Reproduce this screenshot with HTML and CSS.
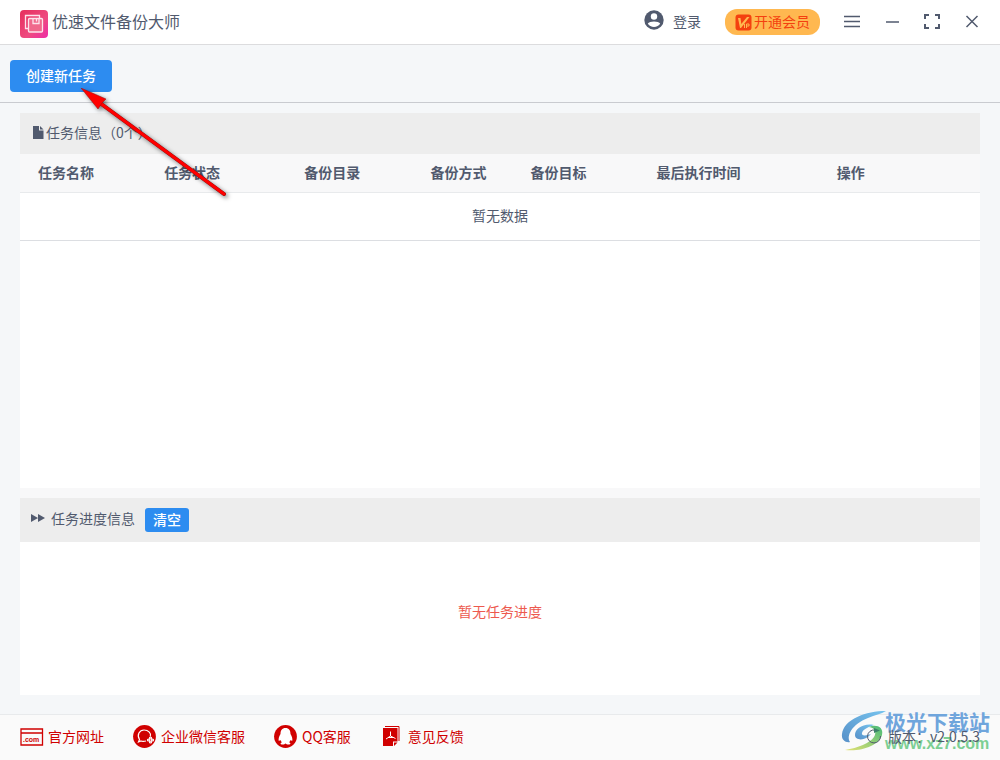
FILE: index.html
```html
<!DOCTYPE html>
<html lang="zh-CN">

<head>
    <meta charset="UTF-8">
    <meta name="viewport" content="width=device-width, initial-scale=1.0">
    <title>优速文件备份大师</title>
    <link rel="stylesheet" href="styles.css">
</head>

<body>
    <header class="titlebar">
        <svg class="logo" viewBox="0 0 28 28">
            <defs>
                <linearGradient id="logo-bg" x1="0" y1="0" x2="1" y2="1">
                    <stop offset="0" stop-color="#e62e5c" />
                    <stop offset="0.6" stop-color="#ee4a80" />
                    <stop offset="1" stop-color="#ee2aa8" />
                </linearGradient>
            </defs>
            <rect width="28" height="28" rx="4" fill="url(#logo-bg)" />
            <g fill="none" stroke="#fde3ec" stroke-width="1.3">
                <path d="M8.5 18.5H5.5V5.5H19.5V8" />
                <rect x="8.5" y="8.5" width="14" height="13.5" rx="1" fill="#f0688c" />
                <path d="M13 8.5v5h6v-5M16.5 9v2.5" />
            </g>
        </svg>
        <h1>优速文件备份大师</h1>
        <a href="#" class="login">
            <svg width="20" height="20" viewBox="0 0 20 20">
                <circle cx="10" cy="10" r="9.7" fill="#515a6e" />
                <circle cx="10" cy="6.5" r="3.2" fill="#fff" />
                <path d="M3.8 13.5C5.5 10.7 14.5 10.7 16.2 13.5C14 18 6 18 3.8 13.5Z" fill="#fff" />
            </svg>
            登录
        </a>
        <button type="button" class="vip">
            <svg width="17" height="17" viewBox="0 0 17 17">
                <rect x="0.5" y="0.5" width="16" height="16" rx="3" fill="#f4400f" />
                <path d="M3 4h2.5l.8 6L12 3h2.5L6 14H5Z" fill="#ffb850" />
                <path d="M9.5 10v4M11.5 14v-4h2.5v2h-2.5" fill="none" stroke="#ffb850" />
            </svg>
            开通会员
        </button>
        <div class="window-btns">
            <button type="button" aria-label="菜单">
                <svg width="16" height="16" viewBox="0 0 16 16"><path d="M0 2.5h16M0 7.5h16M0 12.5h16" /></svg>
            </button>
            <button type="button" aria-label="最小化">
                <svg width="16" height="16" viewBox="0 0 16 16"><path d="M2 8h13" /></svg>
            </button>
            <button type="button" aria-label="全屏">
                <svg width="16" height="16" viewBox="0 0 16 16"><path class="corners" d="M1 5V1H5M11 1h4V5M15 10v4h-4M5 14H1v-4" /></svg>
            </button>
            <button type="button" aria-label="关闭">
                <svg width="16" height="16" viewBox="0 0 16 16"><path d="M2.5 2l11 11M13.5 2l-11 11" /></svg>
            </button>
        </div>
    </header>

    <div class="toolbar">
        <button type="button" class="btn">创建新任务</button>
    </div>

    <main>
        <section class="tasks">
            <h2>
                <svg width="12" height="14" viewBox="0 0 12 14">
                    <path d="M1 1h6v4.5h4.5V14H1Z" fill="#515a6e" />
                    <path d="M8 1l3.5 3.5H8Z" fill="#515a6e" />
                </svg>
                任务信息（0个）
            </h2>
            <table>
                <colgroup>
                    <col class="name">
                    <col class="status">
                    <col class="dir">
                    <col class="mode">
                    <col class="target">
                    <col class="time">
                    <col class="action">
                </colgroup>
                <thead>
                    <tr>
                        <th>任务名称</th>
                        <th>任务状态</th>
                        <th>备份目录</th>
                        <th>备份方式</th>
                        <th>备份目标</th>
                        <th>最后执行时间</th>
                        <th>操作</th>
                    </tr>
                </thead>
                <tbody>
                    <tr>
                        <td colspan="7">暂无数据</td>
                    </tr>
                </tbody>
            </table>
        </section>

        <section class="progress">
            <h2>
                <svg width="15" height="10" viewBox="0 0 15 10">
                    <path d="M1 1l7 4L1 9ZM8 1l7 4l-7 4Z" fill="#515a6e" />
                </svg>
                <span>任务进度信息</span>
                <button type="button" class="btn small">清空</button>
            </h2>
            <p>暂无任务进度</p>
        </section>
    </main>

    <footer>
        <a href="#">
            <svg width="24" height="24" viewBox="0 0 24 24">
                <path d="M1 5h21.5v16H1ZM1 9h21.5" fill="none" stroke="#d00000" stroke-width="1.3" />
                <text x="3" y="18" class="dotcom">.com</text>
            </svg>
            官方网址
        </a>
        <a href="#">
            <svg width="24" height="24" viewBox="0 0 24 24">
                <circle cx="11.5" cy="12.5" r="11.4" fill="#d00000" />
                <g fill="none" stroke="#fff" stroke-width="1.2">
                    <path d="M13 17C11 17.500 9 17.500 8 17L5.500 18L6.500 15.500C3.500 11 6.500 6 11 6C15.500 6 18.500 9.500 17.300 12.500" />
                    <circle cx="17.500" cy="14" r="1" />
                    <circle cx="15.500" cy="16" r="1" />
                    <circle cx="19.500" cy="16" r="1" />
                    <circle cx="17.500" cy="18" r="1" />
                </g>
            </svg>
            企业微信客服
        </a>
        <a href="#">
            <svg width="24" height="24" viewBox="0 0 24 24">
                <circle cx="11.5" cy="12.5" r="11.4" fill="#d00000" />
                <path d="M11.5 4C8 4 6.500 6.500 6.500 10C5.500 12 4 14.500 4.800 17L6.500 16C6.700 17 7.300 17.500 8 18.300C6 19 6 20.500 8.500 20.500C10 20.500 11 20 11.500 19.500C12 20 13 20.500 14.500 20.500C17 20.500 17 19 15 18.300C15.700 17.500 16.300 17 16.500 16L18.200 17C19 14.500 17.500 12 16.500 10C16.500 6.500 15 4 11.500 4Z" fill="#fff" />
            </svg>
            QQ客服
        </a>
        <a href="#">
            <svg width="24" height="24" viewBox="0 0 24 24">
                <path d="M5 2.5H19V17" fill="none" stroke="#d00000" />
                <path d="M3 4h14.5v13.5h-4.5v4.5H3ZM14 18.5h3.5l-3.5 3.5Z" fill="#d00000" />
                <path d="M10.5 7.5v4.5l-4.5 3M10.5 12l5 2.5M8 13.5h5" fill="none" stroke="#fff" />
            </svg>
            意见反馈
        </a>
        <div class="version">
            <div class="watermark">
                <svg width="46" height="42" viewBox="0 0 46 42">
                    <defs>
                        <linearGradient id="swirl-top" x1="0" y1="1" x2="1" y2="0">
                            <stop offset="0" stop-color="#5790c8" />
                            <stop offset="1" stop-color="#76c3ee" />
                        </linearGradient>
                        <linearGradient id="swirl-bottom" x1="0" y1="1" x2="1" y2="0">
                            <stop offset="0" stop-color="#e5e273" />
                            <stop offset="1" stop-color="#48ba78" />
                        </linearGradient>
                    </defs>
                    <path d="M45 1C25 1 3 9 1 24C0 30 5 33 9 32C5 26 11 14 27 8C34 5 40 4 45 1Z" fill="url(#swirl-top)" />
                    <path d="M33 15C22 13 14 19 14 25C14 31 25 31 30 24C25 26 20 26 21 23C22 19 28 17 33 15Z" fill="url(#swirl-top)" />
                    <path d="M28 17C35 14 43 17 41 25C38 35 21 42 4 40C17 38 29 33 33 27C36 22 34 18 28 17Z" fill="url(#swirl-bottom)" />
                </svg>
                <strong>极光下载站</strong>
                <span>www.xz7.com</span>
            </div>
            <svg class="refresh" width="16" height="16" viewBox="0 0 16 16">
                <path d="M9 2A6.5 6.5 0 1 0 14.5 8" fill="none" stroke="#515a6e" />
                <path d="M8 0l6 2.5L8 5Z" fill="#3b8068" />
            </svg>
            版本：v2.0.5.3
        </div>
    </footer>

    <!-- pointer to the "new task" button -->
    <svg class="arrow" width="160" height="124" viewBox="0 0 160 124">
        <path d="M20 15L144 106" stroke="#8c1010" stroke-width="4" stroke-linecap="round" />
        <path d="M20 15L144 106" stroke="#f00" stroke-width="3" stroke-linecap="round" />
        <path d="M1 0L26 11L22 15L18 21Z" fill="#f00" stroke="#8c1010" stroke-width="0.5" />
    </svg>
</body>

</html>
```
FILE: styles.css
```css
/**** DEFAULTS ****/

* {
    padding: 0;
    margin: 0;
    box-sizing: border-box;
}

body {
    display: flex;
    flex-direction: column;
    min-height: 100vh;
    font-family: "Noto Sans CJK SC", sans-serif;
    font-size: 14px;
    line-height: 20px;
    color: #515a6e;
    background-color: #f5f7f9;
}

button {
    font: inherit;
    border: 0;
    cursor: pointer;
}

a {
    color: inherit;
    text-decoration: none;
}

svg {
    flex: none;
}

/**** TITLE BAR ****/

.titlebar {
    display: flex;
    align-items: center;
    height: 45px;
    padding: 0 8px 0 20px;
    background-color: #fff;
    border-bottom: 1px solid #dcdcde;
}

.logo {
    width: 28px;
    height: 28px;
    margin-top: 4px;
}

h1 {
    margin-left: 4px;
    padding-bottom: 2px;
    font-size: 16px;
    font-weight: 400;
}

.login {
    display: flex;
    align-items: center;
    gap: 9px;
    margin-left: auto;
    padding-bottom: 2px;
}

.login svg {
    margin-bottom: 2px;
}

.vip {
    display: flex;
    align-items: center;
    gap: 2px;
    height: 26px;
    margin: 0 12px 0 24px;
    padding: 0 10px 2px;
    color: #f4400f;
    background-color: #ffb850;
    border-radius: 12px;
}

.vip svg {
    margin-top: 2px;
}

.window-btns {
    display: flex;
}

.window-btns button {
    display: flex;
    align-items: center;
    justify-content: center;
    width: 40px;
    height: 42px;
    background: none;
}

.window-btns path {
    fill: none;
    stroke: #515a6e;
    stroke-width: 1.5;
}

.window-btns .corners {
    stroke-width: 2;
}

/**** TOOLBAR ****/

.toolbar {
    padding: 15px 10px 10px;
    border-bottom: 1px solid #c9cbd0;
}

.btn {
    height: 32px;
    padding: 0 16px 2px;
    font-weight: 500;
    color: #fff;
    background-color: #2d8cf0;
    border-radius: 4px;
}

.btn.small {
    height: 24px;
    padding: 0 8px 2px;
    margin-left: 4px;
    border-radius: 3px;
}

/**** PANELS ****/

main {
    flex: 1;
    display: flex;
    flex-direction: column;
    padding: 10px 20px 19px;
}

h2 {
    display: flex;
    align-items: center;
    font-size: 14px;
    font-weight: 400;
    background-color: #ededed;
}

.tasks {
    flex: 1;
    background-color: #fff;
    border-bottom: 10px solid #f8f8f9;
}

.tasks h2 {
    gap: 2px;
    height: 41px;
    padding: 0 12px 3px;
}

table {
    width: 100%;
    table-layout: fixed;
    border-collapse: collapse;
}

.name,
.dir,
.target {
    width: 126px;
}

.status {
    width: 140px;
}

.mode {
    width: 100px;
}

.time {
    width: 180px;
}

.action {
    width: 161px;
}

th {
    height: 38px;
    padding: 0 18px 1px;
    text-align: left;
    font-weight: 700;
    background-color: #f8f8f9;
    border-bottom: 1px solid #e8eaec;
}

td {
    height: 48px;
    padding-bottom: 2px;
    text-align: center;
    border-bottom: 1px solid #dcdee2;
}

.progress {
    background-color: #fff;
}

.progress h2 {
    gap: 6px;
    height: 44px;
    padding: 0 10px;
}

.progress h2 svg,
.progress h2 span {
    margin-bottom: 4px;
}

.progress p {
    padding: 59px 0 74px;
    text-align: center;
    color: #ed5a4f;
}

/**** FOOTER ****/

footer {
    display: flex;
    align-items: center;
    gap: 29px;
    height: 46px;
    padding: 0 20px 3px;
    color: #d00000;
    background-color: #fafafa;
    border-top: 1px solid #e8eaec;
}

footer a {
    display: flex;
    align-items: center;
    gap: 4px;
}

.dotcom {
    font: bold 7px "Liberation Sans", sans-serif;
    fill: #d00000;
}

.version {
    position: relative;
    display: flex;
    align-items: center;
    gap: 6px;
    margin-left: auto;
    color: #515a6e;
    z-index: 0;
}

/* site mark lies under the version text */
.watermark {
    position: absolute;
    right: -10px;
    bottom: -8px;
    display: grid;
    grid-template-columns: 44px auto;
    white-space: nowrap;
    z-index: -1;
}

.watermark svg {
    grid-row: span 2;
}

.watermark strong {
    padding-bottom: 2px;
    font-size: 21px;
    line-height: 22px;
    color: #6fa5dc;
}

.watermark span {
    font: bold 16px/20px "Liberation Sans", sans-serif;
    color: #7ccf93;
}

/**** ARROW ****/

.arrow {
    position: absolute;
    top: 88px;
    left: 80px;
    fill: none;
    pointer-events: none;
    filter: drop-shadow(2px 2px 2px rgba(0, 0, 0, 0.5));
}
```
